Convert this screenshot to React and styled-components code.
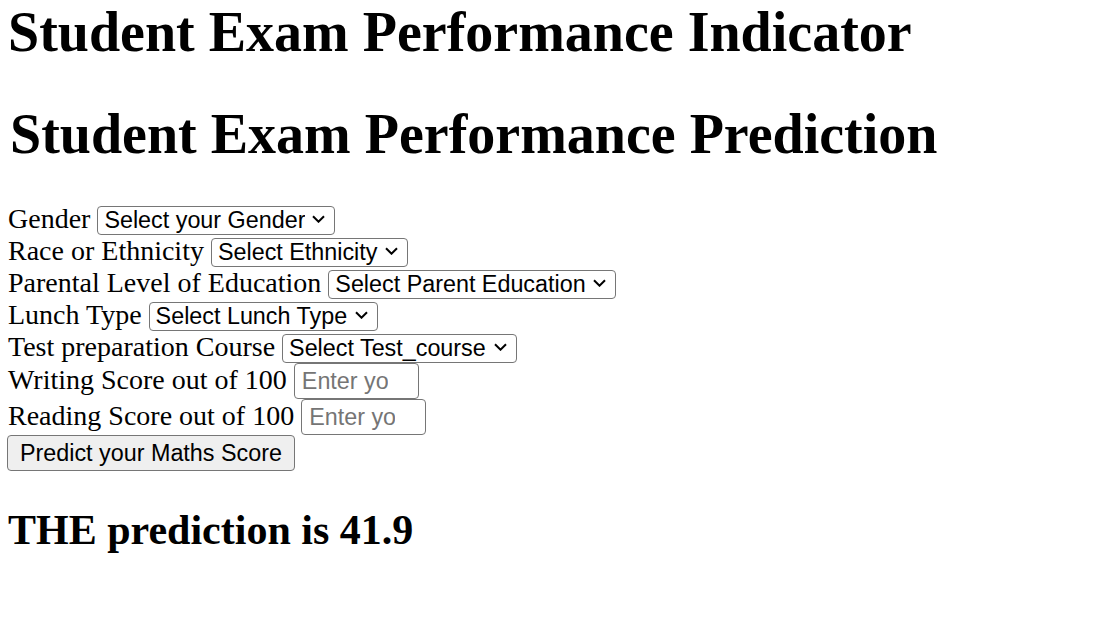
import React from 'react';
import styled, {createGlobalStyle} from 'styled-components';

const GlobalStyle = createGlobalStyle`
  html, body {
    margin: 0;
    padding: 0;
    background: #fff;
  }
  body {
    font-family: "Liberation Serif", "Times New Roman", serif;
    font-size: 28px;
    color: #000;
  }
`;

const Page = styled.div`
  padding: 0 7px;
`;

const Title = styled.h1`
  font-size: 56px;
  font-weight: bold;
  margin: 0 0 37.5px;
  padding-left: ${(p) => (p.$indent ? '3px' : '1px')};
`;

const Form = styled.form`
  margin: 0;
`;

const Row = styled.div`
  line-height: normal;
`;

const Label = styled.label`
  font-size: 28px;
  padding-left: 1px;
`;

const SelectWrap = styled.span`
  position: relative;
  display: inline-block;
`;

const Select = styled.select`
  appearance: none;
  font-family: "Liberation Sans", Arial, sans-serif;
  font-size: 23.33px;
  line-height: 26px;
  height: 29px;
  color: #000;
  background: #fff;
  border: 1px solid #767676;
  border-radius: 4px;
  padding: 0 29px 0 6px;
  margin: 0;
`;

const Chevron = styled.svg`
  position: absolute;
  right: 10px;
  top: 50%;
  width: 13px;
  height: 8px;
  margin-top: -4px;
  pointer-events: none;
`;

const Input = styled.input`
  appearance: textfield;
  font-family: "Liberation Sans", Arial, sans-serif;
  font-size: 23.33px;
  box-sizing: border-box;
  width: 125px;
  height: 36px;
  border: 1px solid #767676;
  border-radius: 4px;
  padding: 3px 30px 3px 7px;
  margin: 0;
  &::placeholder {
    color: #757575;
  }
  &::-webkit-inner-spin-button,
  &::-webkit-outer-spin-button {
    -webkit-appearance: none;
    margin: 0;
  }
`;

const Button = styled.button`
  font-family: "Liberation Sans", Arial, sans-serif;
  font-size: 23.33px;
  box-sizing: border-box;
  height: 36px;
  color: #000;
  background: #efefef;
  border: 1px solid #767676;
  border-radius: 4px;
  padding: 0 12px;
  margin: 0;
`;

const Result = styled.h2`
  font-size: 42px;
  font-weight: bold;
  margin: 35px 0 0;
  padding-left: 1px;
`;

const selects = [
  {label: 'Gender', placeholder: 'Select your Gender'},
  {label: 'Race or Ethnicity', placeholder: 'Select Ethnicity'},
  {label: 'Parental Level of Education', placeholder: 'Select Parent Education'},
  {label: 'Lunch Type', placeholder: 'Select Lunch Type'},
  {label: 'Test preparation Course', placeholder: 'Select Test_course'},
];

const scores = [
  {label: 'Writing Score out of 100', placeholder: 'Enter your Writing score'},
  {label: 'Reading Score out of 100', placeholder: 'Enter your Reading Score'},
];

function Dropdown({placeholder}) {
  return (
    <SelectWrap>
      <Select defaultValue="">
        <option value="" disabled>
          {placeholder}
        </option>
      </Select>
      <Chevron viewBox="0 0 13 8">
        <polyline points="1,1.2 6.5,6.7 12,1.2" fill="none" stroke="#000" strokeWidth="2" />
      </Chevron>
    </SelectWrap>
  );
}

export default function App() {
  return (
    <Page>
      <GlobalStyle />
      <Title>Student Exam Performance Indicator</Title>
      <Title $indent>Student Exam Performance Prediction</Title>
      <Form onSubmit={(e) => e.preventDefault()}>
        {selects.map((item) => (
          <Row key={item.label}>
            <Label>{item.label}</Label> <Dropdown placeholder={item.placeholder} />
          </Row>
        ))}
        {scores.map((item) => (
          <Row key={item.label}>
            <Label>{item.label}</Label> <Input type="number" placeholder={item.placeholder} />
          </Row>
        ))}
        <Row>
          <Button type="submit">Predict your Maths Score</Button>
        </Row>
      </Form>
      <Result>THE prediction is 41.9</Result>
    </Page>
  );
}
